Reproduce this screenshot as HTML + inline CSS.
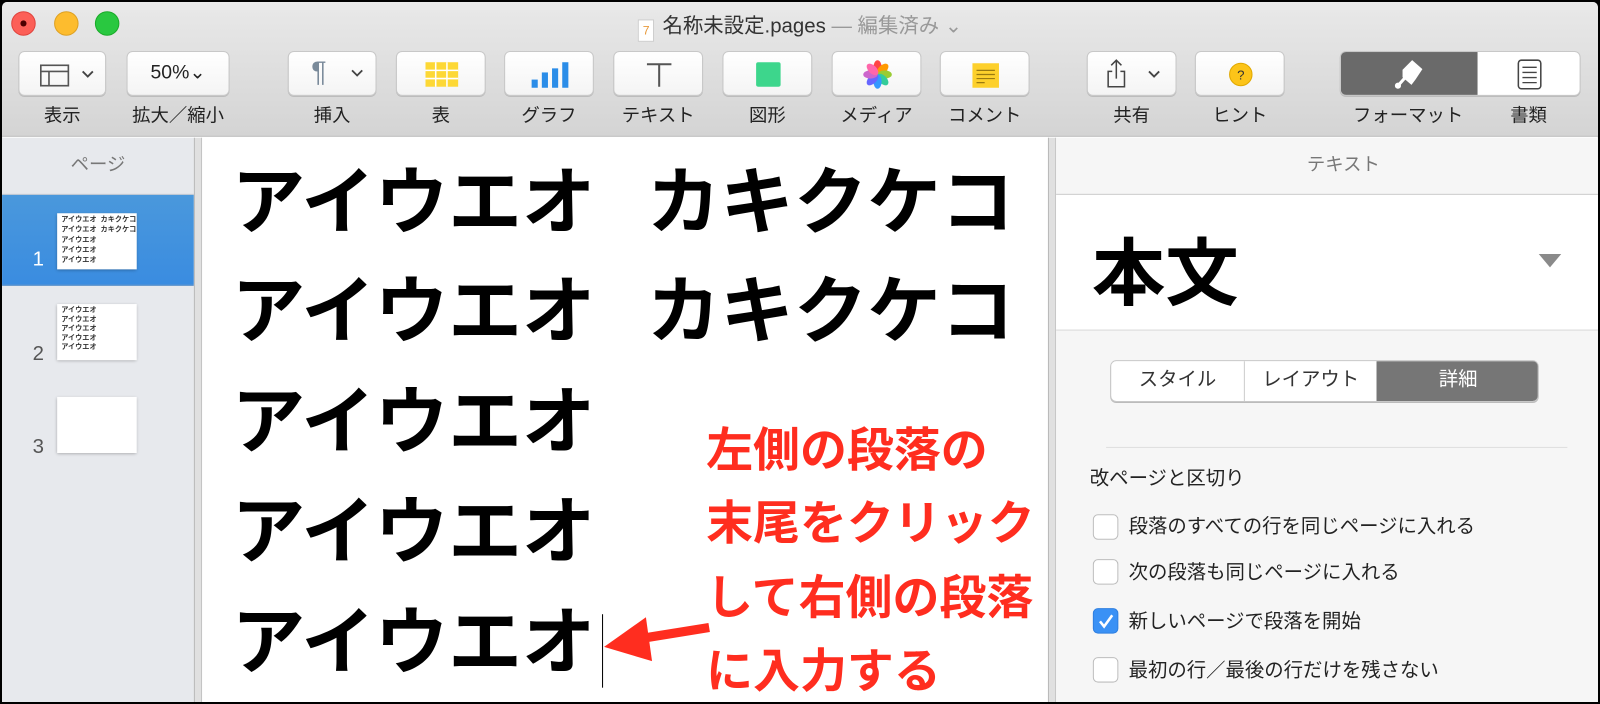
<!DOCTYPE html>
<html><head><meta charset="utf-8"><style>
*{margin:0;padding:0;box-sizing:border-box}
body{width:1600px;height:704px;background:#000;position:relative;overflow:hidden;font-family:"Liberation Sans","Noto Sans CJK JP",sans-serif}
.wrap{position:absolute;left:0;top:0;width:1568px;height:690px;transform:scale(1.0204,1.0203);transform-origin:0 0}
.win{position:absolute;left:2px;top:2px;width:1564px;height:686px;background:#fff;overflow:hidden;border-radius:5px 5px 0 0}
.tb{position:absolute;left:0;top:0;width:1564px;height:132px;background:linear-gradient(#e9e9e9,#d4d4d4);border-bottom:1px solid #b4b4b4}
.tl{position:absolute;top:9px;width:24px;height:24px;border-radius:50%}
.title{position:absolute;top:7px;left:0;width:1564px;text-align:center;font-size:20px;color:#333}
.title span{color:#999}
.btn{position:absolute;top:48px;height:44px;background:linear-gradient(#fff,#f4f4f4);border:1px solid #c8c8c8;border-radius:6px;box-shadow:0 1px 0 #b8b8b8}
.lbl{position:absolute;top:97px;font-size:18px;color:#222;text-align:center;white-space:nowrap}
.side{position:absolute;left:0;top:133px;width:188px;height:570px;background:#e7e9ed}
.sep{position:absolute;top:133px;width:8px;height:570px;background:#e0e0e0;border-left:1px solid #b9b9b9;border-right:1px solid #c4c4c4}
.thumb{position:absolute;left:54px;width:78px;background:#fff;box-shadow:0 1px 3px rgba(0,0,0,.3);font-size:7px;line-height:10px;padding:2px 4px;font-weight:bold;color:#333;white-space:pre}
.num{position:absolute;left:30px;font-size:20px;color:#555}
.big{position:absolute;left:225px;font-size:72px;font-weight:bold;color:#000;line-height:1;letter-spacing:0}
.red{position:absolute;left:690px;font-size:46px;font-weight:bold;color:#ff2d1f;line-height:1;white-space:nowrap}
.rp{position:absolute;left:1033px;top:133px;width:563px;height:570px;background:#f6f6f6}
.cb{position:absolute;left:1069px;width:25px;height:25px;border:1px solid #bdbdbd;border-radius:5px;background:#fff}
.ct{position:absolute;left:1104px;font-size:19px;color:#222;white-space:nowrap}
</style></head><body>
<div class="wrap">
<div class="win">
<div class="tb">
 <div class="tl" style="left:9px;background:#fc5f57;border:1px solid #e0443e"><div style="position:absolute;left:8px;top:8px;width:6px;height:6px;border-radius:50%;background:#4d0000"></div></div>
 <div class="tl" style="left:51px;background:#fdbc2e;border:1px solid #dea123"></div>
 <div class="tl" style="left:91px;background:#29c840;border:1px solid #1aab29"></div>
 <div class="title"><span style="display:inline-block;width:16px;height:22px;background:#fff;border:1px solid #ccc;vertical-align:-2px;margin-right:8px;color:#e89a3c;font-size:12px;line-height:20px">7</span>名称未設定.pages <span>— 編集済み ⌄</span></div>

 <div class="btn" style="left:16px;width:86px"><svg width="86" height="44"><rect x="21" y="13" width="27" height="20" fill="none" stroke="#555" stroke-width="1.6"/><line x1="21" y1="19" x2="48" y2="19" stroke="#555" stroke-width="1.6"/><line x1="29" y1="19" x2="29" y2="33" stroke="#555" stroke-width="1.6"/><path d="M62 19l5 5 5-5" fill="none" stroke="#444" stroke-width="1.8"/></svg></div>
 <div class="lbl" style="left:16px;width:86px">表示</div>
 <div class="btn" style="left:122px;width:101px;font-size:19px;text-align:center;line-height:42px;color:#222">50%⌄</div>
 <div class="lbl" style="left:112px;width:121px">拡大／縮小</div>
 <div class="btn" style="left:280px;width:87px;font-size:28px;color:#7a8a9a;line-height:40px;padding-left:22px">¶<svg width="20" height="14" style="position:absolute;left:60px;top:15px"><path d="M2 3l5 5 5-5" fill="none" stroke="#444" stroke-width="1.8"/></svg></div>
 <div class="lbl" style="left:280px;width:87px">挿入</div>
 <div class="btn" style="left:386px;width:88px"><svg width="88" height="44"><rect x="28" y="10" width="32" height="24" fill="#fdd835"/><path d="M28 18h32M28 26h32M38 10v24M49 10v24" stroke="#fff" stroke-width="1.5"/></svg></div>
 <div class="lbl" style="left:386px;width:88px">表</div>
 <div class="btn" style="left:492px;width:88px"><svg width="88" height="44"><rect x="26" y="27" width="6" height="8" fill="#2b8de8"/><rect x="36" y="20" width="6" height="15" fill="#2b8de8"/><rect x="46" y="16" width="6" height="19" fill="#2b8de8"/><rect x="56" y="10" width="6" height="25" fill="#2b8de8"/></svg></div>
 <div class="lbl" style="left:492px;width:88px">グラフ</div>
 <div class="btn" style="left:599px;width:88px"><svg width="88" height="44"><path d="M32 12h24M44 12v22" stroke="#555" stroke-width="2"/></svg></div>
 <div class="lbl" style="left:590px;width:106px">テキスト</div>
 <div class="btn" style="left:706px;width:88px"><svg width="88" height="44"><rect x="32" y="10" width="24" height="24" rx="2" fill="#3dd68c"/></svg></div>
 <div class="lbl" style="left:706px;width:88px">図形</div>
 <div class="btn" style="left:813px;width:88px"><svg width="88" height="44"><g transform="translate(44,22)"><ellipse cx="0" cy="-7" rx="4" ry="7" fill="#f44"/><ellipse cx="0" cy="-7" rx="4" ry="7" fill="#f90" transform="rotate(45)"/><ellipse cx="0" cy="-7" rx="4" ry="7" fill="#9c3" transform="rotate(90)"/><ellipse cx="0" cy="-7" rx="4" ry="7" fill="#3c9" transform="rotate(135)"/><ellipse cx="0" cy="-7" rx="4" ry="7" fill="#39f" transform="rotate(180)"/><ellipse cx="0" cy="-7" rx="4" ry="7" fill="#66f" transform="rotate(225)"/><ellipse cx="0" cy="-7" rx="4" ry="7" fill="#c6c" transform="rotate(270)"/><ellipse cx="0" cy="-7" rx="4" ry="7" fill="#f6a" transform="rotate(315)"/></g></svg></div>
 <div class="lbl" style="left:806px;width:102px">メディア</div>
 <div class="btn" style="left:919px;width:88px"><svg width="88" height="44"><rect x="31" y="11" width="26" height="24" fill="#fdd02c"/><path d="M35 18h18M35 22h18M35 26h18M35 30h8" stroke="#9a7a10" stroke-width="1.2"/></svg></div>
 <div class="lbl" style="left:910px;width:106px">コメント</div>
 <div class="btn" style="left:1063px;width:88px"><svg width="88" height="44"><path d="M24 19h-4v15h16v-15h-4M28 26V8M23 13l5-5 5 5" fill="none" stroke="#444" stroke-width="1.5"/><path d="M60 19l5 5 5-5" fill="none" stroke="#444" stroke-width="1.8"/></svg></div>
 <div class="lbl" style="left:1063px;width:88px">共有</div>
 <div class="btn" style="left:1169px;width:88px"><svg width="88" height="44"><circle cx="44" cy="22" r="11" fill="#fcc419" stroke="#e0a800"/><text x="44" y="27" font-size="13" text-anchor="middle" fill="#333" font-family="Liberation Sans">?</text></svg></div>
 <div class="lbl" style="left:1169px;width:88px">ヒント</div>
 <div class="btn" style="left:1311px;width:236px;background:#fff;overflow:hidden"><div style="position:absolute;left:0;top:0;width:134px;height:44px;background:#6a6a6a"></div><svg width="236" height="44" style="position:absolute;left:0;top:0"><path d="M56 33l8-9M62 18l8-8 8 7-6 9-3 4-7-6z" stroke="#fff" stroke-width="3" fill="#fff"/><circle cx="56" cy="33" r="3" fill="#fff"/><rect x="174" y="8" width="22" height="28" rx="3" fill="#fff" stroke="#444" stroke-width="1.5"/><path d="M178 15h14M178 20h14M178 25h14M178 30h14" stroke="#444" stroke-width="1.3"/></svg></div>
 <div class="lbl" style="left:1311px;width:134px">フォーマット</div>
 <div class="lbl" style="left:1445px;width:102px">書類</div>
</div>

<div class="side">
 <div style="height:56px;border-bottom:1px solid #c9ccd1;text-align:center;line-height:52px;font-size:18px;color:#777">ページ</div>
 <div style="position:absolute;top:56px;width:188px;height:89px;background:linear-gradient(#4a98dc,#3a8ce0);border-bottom:1px solid #2f77c2"></div>
 <div class="num" style="top:108px;color:#fff">1</div>
 <div class="thumb" style="top:74px;height:55px">アイウエオ  カキクケコ
アイウエオ  カキクケコ
アイウエオ
アイウエオ
アイウエオ</div>
 <div class="num" style="top:201px">2</div>
 <div class="thumb" style="top:163px;height:55px;line-height:9px">アイウエオ
アイウエオ
アイウエオ
アイウエオ
アイウエオ</div>
 <div class="num" style="top:292px">3</div>
 <div class="thumb" style="top:254px;height:55px"></div>
</div>
<div class="sep" style="left:188px"></div>

<div class="big" style="top:161px">アイウエオ</div><div class="big" style="top:161px;left:632px">カキクケコ</div>
<div class="big" style="top:268px">アイウエオ</div><div class="big" style="top:268px;left:632px">カキクケコ</div>
<div class="big" style="top:376px">アイウエオ</div>
<div class="big" style="top:484px">アイウエオ</div>
<div class="big" style="top:592px">アイウエオ</div>
<div style="position:absolute;left:588px;top:600px;width:1px;height:72px;background:#000"></div>
<svg style="position:absolute;left:585px;top:590px" width="120" height="80"><path d="M108 23L40 34" stroke="#ff2d1f" stroke-width="9"/><path d="M5 42L46 13L52 56z" fill="#ff2d1f"/></svg>
<div class="red" style="top:416px">左側の段落の</div>
<div class="red" style="top:488px">末尾をクリック</div>
<div class="red" style="top:561px">して右側の段落</div>
<div class="red" style="top:633px">に入力する</div>

<div class="sep" style="left:1025px"></div>
<div class="rp">
 <div style="height:56px;border-bottom:1px solid #c8c8c8;text-align:center;line-height:52px;font-size:18px;color:#777">テキスト</div>
 <div style="height:133px;background:#fff;border-bottom:1px solid #d8d8d8;position:relative"><div style="position:absolute;left:35px;top:18px;font-size:72px;font-weight:bold;color:#000">本文</div><div style="position:absolute;left:473px;top:58px;width:0;height:0;border-left:11px solid transparent;border-right:11px solid transparent;border-top:13px solid #8a8a8a"></div></div>
</div>
<div style="position:absolute;left:1086px;top:351px;width:420px;height:41px;border:1px solid #c8c8c8;border-radius:6px;background:#fff;overflow:hidden;font-size:19px;color:#333;box-shadow:0 1px 0 #bbb">
 <div style="position:absolute;left:0;width:131px;height:41px;text-align:center;line-height:38px;border-right:1px solid #ccc">スタイル</div>
 <div style="position:absolute;left:131px;width:129px;height:41px;text-align:center;line-height:38px">レイアウト</div>
 <div style="position:absolute;left:260px;width:160px;height:41px;text-align:center;line-height:38px;background:#767676;color:#fff">詳細</div>
</div>
<div style="position:absolute;left:1082px;top:436px;width:452px;height:1px;background:#ddd"></div>
<div class="ct" style="left:1066px;top:452px">改ページと区切り</div>
<div class="cb" style="top:502px"></div><div class="ct" style="top:499px">段落のすべての行を同じページに入れる</div>
<div class="cb" style="top:546px"></div><div class="ct" style="top:544px">次の段落も同じページに入れる</div>
<div class="cb" style="top:594px;background:#3a91f5;border-color:#2f7fe0"><svg width="25" height="25" style="position:absolute;left:-1px;top:-1px"><path d="M7 13l4 5 8-11" fill="none" stroke="#fff" stroke-width="2.5"/></svg></div><div class="ct" style="top:592px">新しいページで段落を開始</div>
<div class="cb" style="top:642px"></div><div class="ct" style="top:640px">最初の行／最後の行だけを残さない</div>
</div>
</div>
</body></html>
